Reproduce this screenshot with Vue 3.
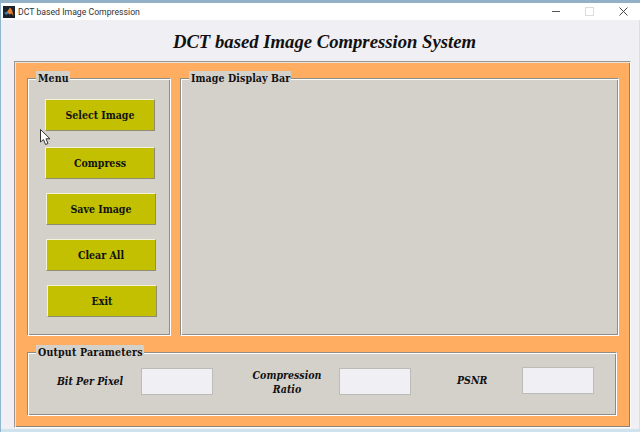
<script setup>
const buttons = [
  { label: 'Select Image', cls: 'b0 first' },
  { label: 'Compress', cls: 'b0' },
  { label: 'Save Image', cls: 'b1' },
  { label: 'Clear All', cls: 'b1' },
  { label: 'Exit', cls: 'b2' }
]
</script>

<template>
  <div class="window">
    <div class="desktop"></div>
    <header class="titlebar">
      <svg class="logo" width="12" height="12" viewBox="0 0 12 12">
        <rect width="12" height="12" fill="#1c2229" />
        <path d="M1 7 L4 5.5 L6 6.5 L3.5 9 Z" fill="#3f7fb5" />
        <path d="M4 6 L7 1.5 L9 4 L10.5 10 L8.5 7.5 L6.5 8.5 Z" fill="#e8802a" />
      </svg>
      <span class="wintitle">DCT based Image Compression</span>
      <div class="controls">
        <span class="min"></span>
        <span class="max"></span>
        <svg width="9" height="9" viewBox="0 0 9 9"><path d="M.5 .5 L8.5 8.5 M8.5 .5 L.5 8.5" stroke="#444" stroke-width="1" fill="none" /></svg>
      </div>
    </header>
    <main class="body">
      <h1 class="heading">DCT based Image Compression System</h1>
      <section class="orange">
        <div class="top-row">
          <div class="panel menu">
            <span class="legend leg-menu">Menu</span>
            <button v-for="b in buttons" :key="b.label" class="btn" :class="b.cls">{{ b.label }}</button>
          </div>
          <div class="panel display">
            <span class="legend leg-display">Image Display Bar</span>
          </div>
        </div>
        <div class="panel output">
          <span class="legend leg-output">Output Parameters</span>
          <span class="param p1">Bit Per Pixel</span>
          <div class="field f1"></div>
          <span class="param p2">Compression<br />Ratio</span>
          <div class="field f2"></div>
          <span class="param p3">PSNR</span>
          <div class="field f3"></div>
        </div>
      </section>
    </main>
    <svg class="cursor" width="11" height="17" viewBox="0 0 11 17">
      <path d="M.5 .5 V13 L3.5 10.5 L5.5 15.5 L8 14.5 L6 9.8 L10 9.8 Z" fill="#fff" stroke="#333" stroke-width="1" />
    </svg>
  </div>
</template>

<style scoped>
.window {
  position: relative;
  width: 640px;
  height: 432px;
  overflow: hidden;
  background: #f0eff3;
  display: flex;
  flex-direction: column;
  box-shadow: inset 1px 0 #8fb8d0, inset -1px 0 #cfe3ee, inset 0 -3px #cfe3ee;
  font-family: "DejaVu Serif Condensed", "DejaVu Serif", serif;
}
.desktop {
  height: 3px;
  flex: none;
  background: #92b1c6;
}
.titlebar {
  height: 17px;
  flex: none;
  margin-left: 1px;
  background: #fff;
  display: flex;
  align-items: center;
  padding-left: 2px;
  color: #333;
}
.logo { flex: none; }
.wintitle {
  margin-left: 3px;
  font: 8.7px Roboto, "Liberation Sans", sans-serif;
}
.controls {
  margin-left: auto;
  margin-right: 12px;
  display: flex;
  align-items: center;
  gap: 25px;
}
.min { width: 8px; height: 1px; background: #555; }
.max { width: 7px; height: 7px; border: 1px solid #dcdcdc; }
.body {
  flex: 1;
  display: flex;
  flex-direction: column;
  min-height: 0;
}
.heading {
  height: 41px;
  margin: 0;
  flex: none;
  text-align: center;
  line-height: 44px;
  font-family: "Liberation Serif", serif;
  font-style: italic;
  font-weight: 700;
  font-size: 18.7px;
  color: #111;
  padding-left: 9px;
  box-sizing: border-box;
}
.orange {
  width: 617px;
  height: 367px;
  margin-left: 14px;
  box-sizing: border-box;
  background: #ffad60;
  border: 1px solid;
  border-color: #9a9792 #fff #fff #9a9792;
  box-shadow: inset 1px 1px #e8e4de, inset -1px -1px #8a8178;
  padding: 16px 0 0 12px;
  display: flex;
  flex-direction: column;
}
.top-row {
  display: flex;
  gap: 9px;
  height: 258px;
}
.panel {
  position: relative;
  box-sizing: border-box;
  background: #d4d0ca;
  border: 1px solid;
  border-color: #8f8c86 #fff #fff #8f8c86;
  box-shadow: inset 1px 1px #fff, inset -1px -1px #8f8c86;
}
.menu {
  width: 144px;
  display: flex;
  flex-direction: column;
  padding-top: 20px;
}
.display { width: 439px; }
.output {
  width: 590px;
  height: 64px;
  margin-top: 16px;
  display: flex;
  align-items: center;
}
.legend {
  position: absolute;
  background: #d4d0ca;
  font-weight: 700;
  font-size: 10.5px;
  line-height: 14px;
  color: #111;
  padding: 0 1px 0 2px;
  white-space: nowrap;
  letter-spacing: .1px;
}
.leg-menu { left: 8px; top: -8px; }
.leg-display { left: 8px; top: -8px; }
.leg-output { left: 8px; top: -8px; letter-spacing: .2px; }
.btn {
  display: block;
  width: 110px;
  height: 32px;
  box-sizing: border-box;
  padding: 0;
  margin-bottom: 14px;
  background: #c2c000;
  border: 1px solid;
  border-color: #f5f2d8 #8f8c70 #8f8c70 #f5f2d8;
  font-family: inherit;
  font-weight: 700;
  font-size: 10.5px;
  letter-spacing: 0;
  color: #111;
}
.first { margin-bottom: 16px; }
.b0 { margin-left: 17px; }
.b1 { margin-left: 18px; }
.b2 { margin-left: 19px; }
.param {
  font-style: italic;
  font-weight: 700;
  font-size: 10.5px;
  line-height: 14px;
  color: #111;
  text-align: center;
  white-space: nowrap;
}
.field {
  box-sizing: border-box;
  width: 72px;
  height: 27px;
  background: #f0eff3;
  border: 1px solid #bdbbb8;
  flex: none;
}
.p1 { margin-left: 28px; width: 68px; margin-bottom: 6px; }
.f1 { margin-left: 17px; margin-bottom: 5px; }
.p2 { margin-left: 38px; width: 72px; margin-bottom: 4px; }
.f2 { margin-left: 16px; margin-bottom: 5px; }
.p3 { margin-left: 46px; width: 30px; margin-bottom: 8px; }
.f3 { margin-left: 35px; margin-bottom: 7px; }
.cursor {
  position: absolute;
  left: 40px;
  top: 129px;
}
</style>
